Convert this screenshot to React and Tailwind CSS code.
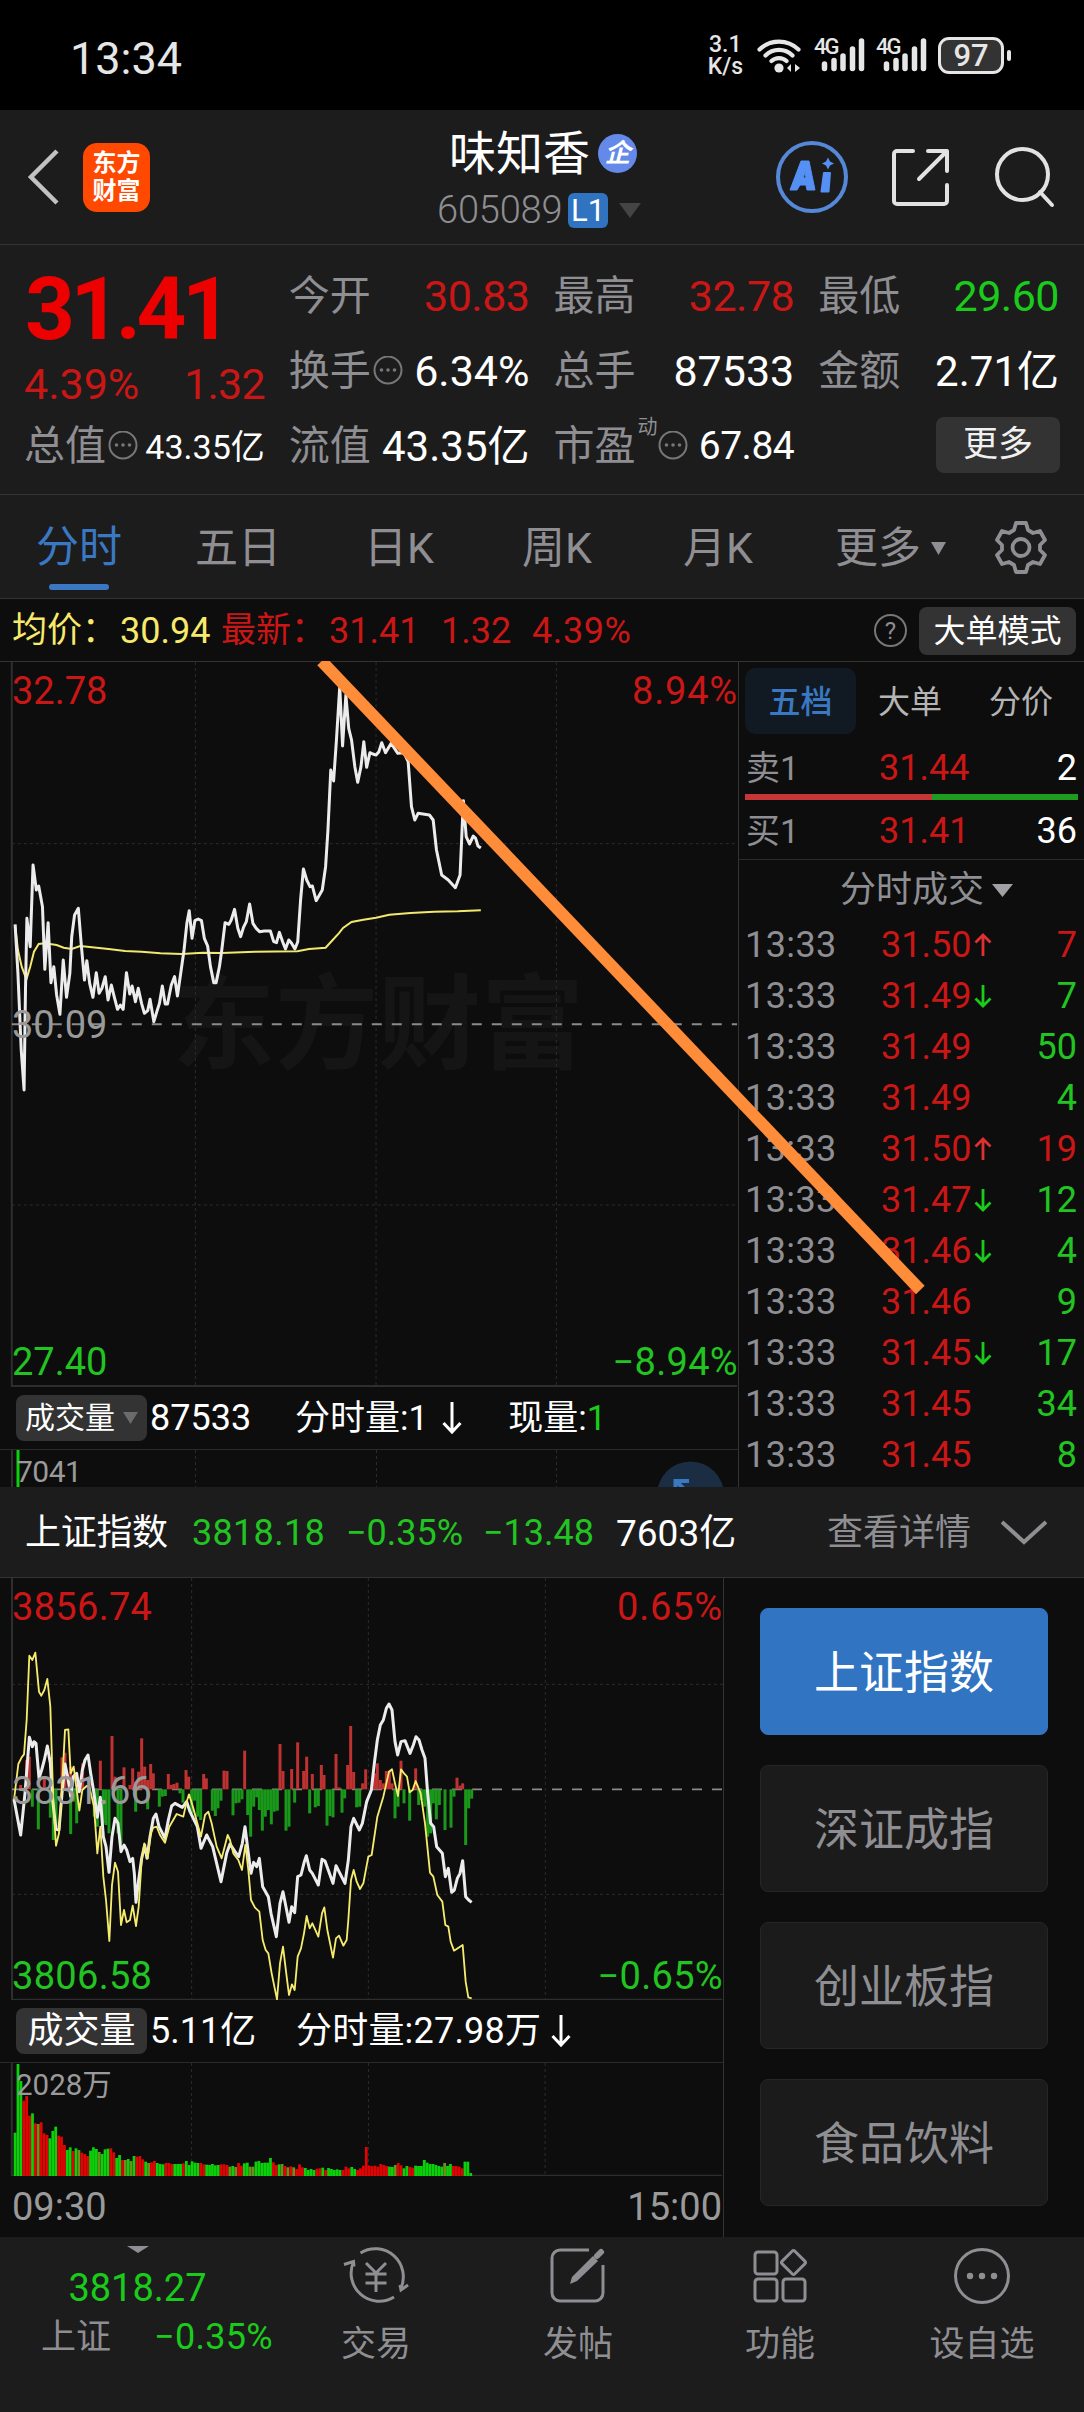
import clsx from "clsx";

const PRICE_LINE =
  "32,1003 38,1150 45,1380 51,1500 54,1200 57,985 64,1070 70,825 77,900 82,888 90,950 95,1138 102,998 108,1178 114,1130 120,1215 127,1273 134,1110 141,1222 148,1150 152,1040 158,975 166,955 172,1060 179,1170 184,1112 190,1180 197,1222 204,1148 210,1210 216,1195 223,1160 229,1230 236,1185 242,1220 249,1258 255,1245 261,1258 268,1148 275,1212 280,1188 287,1235 293,1195 300,1240 306,1270 313,1262 318,1228 326,1295 333,1262 338,1240 344,1188 350,1242 355,1242 363,1185 370,1160 376,1218 383,1150 390,1080 396,1000 401,962 407,1045 413,992 420,987 427,992 433,1045 440,1068 446,1130 453,1178 458,1178 465,1130 470,1080 477,998 485,1003 490,990 497,958 504,1015 510,1040 516,1012 522,995 529,942 536,1000 543,1015 550,1025 560,1023 573,1023 580,1055 586,1058 592,1027 599,1055 605,1077 612,1050 618,1060 625,1077 631,1055 637,930 643,837 650,870 657,890 662,888 670,932 677,915 683,900 690,830 695,720 701,540 707,573 713,450 720,290 726,468 733,315 739,415 745,450 752,530 758,577 765,530 771,455 777,532 784,488 790,492 797,495 803,485 809,458 817,488 829,460 843,490 856,488 865,515 872,650 879,690 886,670 910,675 918,690 925,780 936,855 950,870 965,893 975,855 982,632 988,740 995,762 1003,738 1008,745 1013,768 1019,774";

const AVG_LINE =
  "32,1005 38,1080 46,1130 56,1168 64,1130 72,1085 82,1062 95,1060 120,1065 135,1073 152,1077 170,1068 195,1072 230,1077 265,1083 300,1085 340,1090 385,1092 430,1088 470,1089 540,1085 630,1084 655,1077 690,1073 705,1050 718,1030 727,1014 745,996 770,989 797,983 825,974 870,969 920,965 970,964 1019,961";

const INDEX_LINE =
  "42,718 62,825 75,700 88,532 97,560 102,545 108,550 117,655 125,630 133,600 142,558 151,610 158,720 168,808 177,810 186,700 195,612 203,650 212,708 220,650 230,640 238,695 247,630 255,600 264,585 272,640 282,700 292,772 301,712 310,830 318,860 327,937 336,830 345,775 354,790 363,875 372,855 380,870 390,905 398,895 403,940 408,1027 416,960 425,895 434,855 441,895 450,830 460,775 468,762 477,800 495,835 505,780 515,738 525,730 547,742 560,725 570,755 592,800 603,865 620,825 638,860 663,965 680,880 690,852 705,875 716,890 727,850 735,800 745,880 753,940 761,907 770,920 778,895 788,980 805,1010 813,1060 829,1130 840,1030 849,995 867,1087 875,1040 884,1058 893,950 903,945 913,905 919,887 929,930 937,940 955,975 966,898 975,903 999,970 1008,917 1035,970 1045,900 1053,800 1061,775 1078,810 1087,790 1100,725 1114,690 1123,610 1132,540 1141,495 1150,480 1159,445 1167,432 1176,450 1185,545 1193,585 1203,545 1215,542 1230,580 1240,555 1248,530 1257,540 1266,570 1275,595 1283,700 1292,790 1301,800 1310,860 1327,880 1336,950 1345,925 1355,997 1363,990 1372,955 1380,940 1388,902 1397,1010 1406,1020 1415,1027";

const INDEX_AVG_LINE =
  "42,720 55,612 65,592 72,583 80,480 88,287 97,300 106,278 117,395 124,407 133,390 142,357 151,440 160,730 168,857 177,820 186,680 195,510 205,508 212,640 221,620 230,690 238,752 247,690 260,678 268,680 282,740 292,880 301,800 310,950 318,1020 328,1143 336,975 345,908 354,935 363,1095 372,1050 380,1087 390,1080 398,1037 408,1098 416,1040 425,900 433,850 443,895 452,820 460,803 470,800 480,825 495,848 508,800 530,762 550,770 560,725 567,703 580,745 592,790 603,830 615,765 625,755 635,790 650,860 665,895 683,825 690,840 700,880 715,900 726,930 736,855 745,930 753,1020 765,1043 778,1055 788,1140 797,1170 805,1180 815,1240 831,1318 840,1210 849,1160 860,1250 867,1305 876,1273 884,1290 893,1190 903,1165 912,1120 920,1068 929,1105 937,1090 955,1130 966,1060 973,1042 982,1110 999,1193 1008,1135 1017,1127 1030,1157 1040,1140 1045,1080 1053,960 1061,930 1070,965 1080,987 1090,970 1105,890 1115,885 1132,770 1150,710 1167,635 1176,628 1185,670 1194,708 1203,628 1212,640 1221,650 1229,697 1238,690 1247,663 1262,700 1275,790 1290,938 1300,950 1312,1005 1327,1025 1336,1095 1345,1100 1352,1145 1362,1172 1388,1155 1397,1265 1405,1312 1415,1315";

// x,y of the bar end; bars above the zero line are red, below are green
const FLOW_BARS =
  "62,675 80,600 88,590 133,655 186,592 195,578 212,620 248,610 301,602 336,528 345,650 372,622 390,675 398,625 407,665 416,635 425,535 434,620 443,660 452,612 460,640 505,642 514,675 522,672 531,668 558,630 566,650 611,642 619,655 672,632 681,633 734,572 840,552 849,633 875,627 893,547 911,633 920,590 937,642 964,615 972,645 1008,582 1017,682 1043,615 1052,498 1061,636 1088,670 1097,628 1124,640 1132,610 1141,660 1150,670 1159,633 1168,632 1176,670 1203,602 1247,625 1371,653 1380,677 1388,670 97,740 115,808 151,773 160,840 168,800 212,822 221,725 230,790 283,770 292,800 310,790 318,795 327,820 354,820 363,850 407,755 443,748 478,740 487,710 496,708 540,700 549,728 575,760 584,722 593,770 602,780 637,752 646,768 654,745 663,722 699,766 708,730 717,728 726,718 743,765 752,830 761,740 770,712 778,750 787,812 796,770 805,750 814,793 823,755 832,752 858,812 867,800 884,728 929,760 946,742 955,738 981,797 990,768 999,772 1026,758 1034,715 1070,742 1079,740 1185,775 1194,740 1212,730 1229,782 1256,735 1265,720 1274,740 1283,830 1292,820 1300,730 1309,778 1318,735 1335,810 1353,803 1362,710 1397,855 1406,745 1415,716"
    .split(" ")
    .map((p) => p.split(",").map(Number));

const VOLUME_BARS =
  "g458 g252 g303 r362 r348 r407 g400 r430 o432 r427 r460 r465 g475 g453 g440 r467 r470 r495 g510 g502 r513 g505 o510 r518 r522 r528 g512 g502 g507 o516 g522 g508 g506 r505 r517 g534 g525 r540 o540 g537 o543 g528 r530 r528 r538 g545 o549 r547 r543 g549 g552 g553 r549 r549 r552 g552 g552 g552 r550 g543 g555 g544 g548 g549 r549 r553 g554 g555 g552 g556 g555 r553 r553 r555 o560 g558 o561 r549 r557 g550 g548 o560 o560 g545 g543 g549 g548 g548 g534 r547 r555 g553 o552 r558 o562 r559 o562 r567 r553 r562 g564 g570 g567 g570 r566 r565 g563 r570 g564 g567 g570 g568 g570 r570 r560 r565 g561 g567 r570 r565 r557 r501 r557 r558 r557 r560 r552 r555 r558 g560 g561 o555 r549 r556 g565 g558 r561 r563 g557 g558 g558 g540 g548 g552 g552 g555 g558 g560 o549 g558 g552 r558 r558 r560 r565 g545 g545 g579".split(
    " ",
  );

const VOLUME_COLORS = { g: "#0bd10b", r: "#e00505", o: "#6f8f1c" };

const TICKS = [
  { price: "31.50", dir: "up", qty: 7, red: true },
  { price: "31.49", dir: "down", qty: 7 },
  { price: "31.49", qty: 50 },
  { price: "31.49", qty: 4 },
  { price: "31.50", dir: "up", qty: 19, red: true },
  { price: "31.47", dir: "down", qty: 12 },
  { price: "31.46", dir: "down", qty: 4 },
  { price: "31.46", qty: 9 },
  { price: "31.45", dir: "down", qty: 17 },
  { price: "31.45", qty: 34 },
  { price: "31.45", qty: 8 },
];

const INDEXES = ["上证指数", "深证成指", "创业板指", "食品饮料"];

const Triangle = ({ className }) => (
  <svg viewBox="0 0 20 12" preserveAspectRatio="none" className={className}>
    <path d="M0 0h20L10 12z" fill="currentColor" />
  </svg>
);

const InfoDots = () => (
  <svg viewBox="0 0 32 32" className="size-8 shrink-0 text-[#77777a]">
    <circle cx="17" cy="14" r="13.500" fill="none" stroke="currentColor" strokeWidth="2" />
    <circle cx="10.500" cy="14" r="1.800" fill="currentColor" />
    <circle cx="17" cy="14" r="1.800" fill="currentColor" />
    <circle cx="23.500" cy="14" r="1.800" fill="currentColor" />
  </svg>
);

const Arrow = ({ dir, className }) => (
  <svg
    viewBox="0 0 18 24"
    className={clsx(className, dir === "up" && "rotate-180")}
    fill="none"
    stroke="currentColor"
    strokeWidth="2.800"
  >
    <path d="M9 1v21M1.500 14.500L9 22l7.500-7.500" />
  </svg>
);

const LongArrow = ({ className }) => (
  <svg viewBox="0 0 20 34" className={clsx("h-[34px] w-5", className)} fill="none" stroke="currentColor" strokeWidth="3">
    <path d="M10 1v30M1.500 22L10 31l8.500-9" />
  </svg>
);

const Signal = () => (
  <div className="relative h-9 w-[51px]">
    <span className="absolute -top-px left-0 text-[22px] font-medium tracking-[-2px]">4G</span>
    <svg viewBox="0 0 51 36" className="size-full" stroke="currentColor" strokeWidth="5.500" strokeLinecap="round">
      <path d="M10.500 27v4.500M20 23.500v8M29 19v12.500M38.500 12v19.500M47.500 4v27.500" />
    </svg>
  </div>
);

const StatusBar = () => (
  <div className="flex h-[110px] items-center bg-black pl-[70px] pr-[73px] text-[#e6e6e6]">
    <span className="pt-1.5 text-[45px]">13:34</span>
    <div className="ml-auto flex items-center">
      <div className="mr-[14px] flex flex-col items-center text-[23px] font-medium">
        <span>3.1</span>
        <span className="-mt-px">K/s</span>
      </div>
      <svg viewBox="0 0 44 36" className="mr-[13px] h-9 w-11" fill="none" stroke="currentColor">
        <path d="M2.500 12.500a28 28 0 0 1 39 0M8.500 18.500a19 19 0 0 1 27 0M14.500 24a11 11 0 0 1 15 0" strokeWidth="4.200" strokeLinecap="round" />
        <circle cx="22" cy="31" r="4.600" fill="currentColor" stroke="none" />
        <path d="M34 27v8l-4-4zM38 35v-8l5 4z" fill="currentColor" stroke="none" />
      </svg>
      <div className="mr-[11px]">
        <Signal />
      </div>
      <div className="mr-[11px]">
        <Signal />
      </div>
      <div className="flex h-[37px] w-[66px] items-center justify-center rounded-[11px] border-[3px] border-current bg-[#333] text-[31px] font-medium">
        97
      </div>
      <div className="ml-[3px] h-[11px] w-1 rounded-full bg-current" />
    </div>
  </div>
);

const Header = () => (
  <header className="flex h-[135px] items-center border-b border-[#333] bg-[#1c1c1c]">
    <svg viewBox="0 0 34 56" className="ml-[26px] h-14 w-[34px]" fill="none" stroke="#c2c2c2" strokeWidth="4.500">
      <path d="M31 2L5 28l26 26" />
    </svg>
    <div className="ml-[23px] flex h-[69px] w-[67px] flex-col items-center justify-center gap-[4px] rounded-[14px] bg-[#ff4800] text-[24px] font-bold text-white">
      <span>东方</span>
      <span>财富</span>
    </div>
    <div className="ml-[287px] flex w-[208px] flex-col">
      <div className="mt-[3px] flex h-[48px] items-center pl-[12px]">
        <span className="text-[47px] text-white">味知香</span>
        <span className="ml-[8px] flex size-[39px] items-center justify-center rounded-full bg-[#6489e8] text-[26px] font-bold italic text-white">
          企
        </span>
      </div>
      <div className="mt-[15px] flex h-[36px] items-center">
        <span className="w-[131px] text-[38px] font-light tracking-[-0.2px] text-[#8e8e93]">605089</span>
        <span className="flex h-[35px] w-10 items-center justify-center rounded-[6px] bg-[#2f73c1] text-[31px] text-white">
          L1
        </span>
        <Triangle className="ml-[11px] h-[15px] w-[22px] text-[#444]" />
      </div>
    </div>
    <svg viewBox="0 0 74 74" className="ml-[130px] size-[74px]">
      <circle cx="37" cy="37" r="34" fill="none" stroke="#5588d6" strokeWidth="4" />
      <path d="M26 21h8l6 29h-8l-1-5h-6l-3 5h-7z M28.500 38h2.500l-1-7z" fill="#5590f5" fillRule="evenodd" stroke="#5590f5" strokeLinejoin="round" />
      <path d="M49 33h6l-1.500 18.500h-7z" fill="#5590f5" stroke="#5590f5" strokeWidth="2" strokeLinejoin="round" />
      <path d="M53 17.500l2 4 4 2-4 2-2 4-2-4-4-2 4-2z" fill="#5590f5" />
    </svg>
    <svg viewBox="0 0 60 60" className="ml-[41px] size-[60px]" fill="none" stroke="#e2e2e2" strokeWidth="4" strokeLinecap="round" strokeLinejoin="round">
      <path d="M23 4H7a3 3 0 0 0-3 3v47a3 3 0 0 0 3 3h47a3 3 0 0 0 3-3V38M38 4h19v20M57 4L29 32" />
    </svg>
    <svg viewBox="0 0 62 62" className="ml-[44px] size-[62px]" fill="none" stroke="#e2e2e2" strokeWidth="4">
      <circle cx="28.500" cy="28.500" r="25.500" />
      <path d="M46 46l12 13" strokeLinecap="round" />
    </svg>
  </header>
);

const Stat = ({ label, value, info, sup, className }) => (
  <div className="flex h-[75px] items-center">
    <span className="-ml-px text-[41px] text-[#8e8e93]">{label}</span>
    {sup && <span className="-mr-0.5 mb-10 ml-0.5 text-[20px] text-[#8e8e93]">{sup}</span>}
    {info && <InfoDots />}
    <span className={clsx("ml-auto whitespace-nowrap", className)}>{value}</span>
  </div>
);

const Stats = () => (
  <section className="grid h-[250px] grid-cols-4 gap-x-[25px] border-b border-[#333] bg-[#1c1c1c] px-[25px] pt-[14px] text-white">
    <div>
      <div className="flex h-[101px] items-center text-[87px] font-bold tracking-[-4.5px] text-[#ec0000]">31.41</div>
      <div className="flex h-[49px] items-center justify-between text-[43px] text-[#cb1616]">
        <span className="-ml-px">4.39%</span>
        <span className="tracking-[-0.8px]">1.32</span>
      </div>
      <Stat label="总值" value="43.35亿" info className="text-[34px]" />
    </div>
    <div>
      <Stat label="今开" value="30.83" className="text-[43px] tracking-[-0.5px] text-[#cb1616]" />
      <Stat label="换手" value="6.34%" info className="text-[43px]" />
      <Stat label="流值" value="43.35亿" className="text-[42px]" />
    </div>
    <div>
      <Stat label="最高" value="32.78" className="text-[43px] tracking-[-0.5px] text-[#cb1616]" />
      <Stat label="总手" value="87533" className="text-[43px]" />
      <Stat label="市盈" sup="动" value="67.84" info className="text-[39px] tracking-[-0.5px]" />
    </div>
    <div>
      <Stat label="最低" value="29.60" className="text-[43px] tracking-[-0.5px] text-[#1bcb1b]" />
      <Stat label="金额" value="2.71亿" className="text-[42px]" />
      <div className="flex h-[75px] items-center justify-end">
        <button className="-mr-px mb-1 h-14 w-[124px] rounded-lg bg-[#333] text-[35px] text-[#f0f0f0]">更多</button>
      </div>
    </div>
  </section>
);

const Tabs = () => (
  <nav className="flex h-[104px] items-center border-b border-[#333] bg-[#1c1c1c] text-[43px] text-[#8e8e93]">
    <div className="ml-[36px] flex w-[86px] flex-col items-center text-[#3a78c3]">
      <span className="mt-[22px]">分时</span>
      <div className="mt-[15px] h-[6px] w-[60px] rounded-full bg-[#3a78c3]" />
    </div>
    <div className="flex items-center pt-[3px]">
      <span className="ml-[73px]">五日</span>
      <span className="ml-[83px] w-[74px]">日K</span>
      <span className="ml-[84px] w-[75px]">周K</span>
      <span className="ml-[86px] w-[75px]">月K</span>
      <span className="ml-[77px]">更多</span>
      <Triangle className="ml-[10px] h-[13px] w-[15px]" />
      <svg viewBox="0 0 54 54" className="ml-[48px] size-[54px]" fill="none" stroke="currentColor" strokeWidth="3.800" strokeLinejoin="round">
        <path d="M22 2h10l2 7 5 3 7-2 5 9-5 5v5l5 5-5 9-7-2-5 3-2 7H22l-2-7-5-3-7 2-5-9 5-5v-5l-5-5 5-9 7 2 5-3z" />
        <circle cx="27" cy="26.500" r="8.500" />
      </svg>
    </div>
  </nav>
);

const QuoteBar = () => (
  <div className="flex h-[62px] items-center pl-[12px] pr-[8px] pt-px text-[36px] text-[#cb1616]">
    <span className="w-[108px] text-[35px] text-[#f7e96c]">均价：</span>
    <span className="w-[101px] text-[#f7e96c]">30.94</span>
    <span className="w-[108px] text-[35px]">最新：</span>
    <span className="w-[112px]">31.41</span>
    <span className="w-[91px]">1.32</span>
    <span className="tracking-[0.6px]">4.39%</span>
    <div className="ml-auto flex size-[33px] items-center justify-center rounded-full border-2 border-[#77777a] text-[24px] text-[#8e8e93]">
      ?
    </div>
    <button className="ml-[12px] h-12 w-[157px] rounded-lg bg-[#333] text-[32px] text-white">大单模式</button>
  </div>
);

const PriceChart = () => (
  <div className="relative h-[726px] border-t border-[#333]">
    <span className="absolute left-[172px] top-[312px] text-[103px] font-bold text-[#151515]">东方财富</span>
    <svg viewBox="0 216 1564 2175" preserveAspectRatio="none" className="absolute inset-0 size-full" fill="none">
      <g stroke="#2c2c2c" strokeDasharray="3 3">
        <path vectorEffect="non-scaling-stroke" d="M414 216V2388M797 216V2388M1179 216V2388M25 761H1560M25 1845H1560" />
      </g>
      <path vectorEffect="non-scaling-stroke" d="M25 216V2388H1562" stroke="#2e2e2e" strokeWidth="2" />
      <path vectorEffect="non-scaling-stroke" d="M25 1303H1562" stroke="#8a8a8a" strokeWidth="2" strokeDasharray="10 10" />
      <polyline vectorEffect="non-scaling-stroke" points={AVG_LINE} stroke="#f2e86e" strokeWidth="2" />
      <polyline vectorEffect="non-scaling-stroke" points={PRICE_LINE} stroke="#ececec" strokeWidth="3" strokeLinejoin="round" />
    </svg>
    <div className="absolute inset-0 text-[38px]">
      <span className="absolute left-[12px] top-[10px] text-[#cb1616]">32.78</span>
      <span className="absolute right-0 top-[10px] tracking-[0.8px] text-[#cb1616]">8.94%</span>
      <span className="absolute left-[12px] top-[344px] text-[#9a9a9a]">30.09</span>
      <span className="absolute left-[12px] top-[681px] text-[#22c422]">27.40</span>
      <span className="absolute right-0 top-[681px] tracking-[0.3px] text-[#22c422]">−8.94%</span>
    </div>
  </div>
);

const VolumeHeader = ({ children, menu }) => (
  <div className="flex h-[62px] items-center pl-4 text-[36px] text-white">
    <div
      className={clsx(
        "mr-[3px] flex h-[46px] w-[131px] items-center rounded-lg bg-[#333]",
        menu ? "pl-[9px] text-[30px]" : "justify-center text-[36px]",
      )}
    >
      成交量
      {menu && <Triangle className="ml-[8px] h-[12px] w-[15px] text-[#6b6b6b]" />}
    </div>
    {children}
  </div>
);

const OrderBook = () => (
  <aside className="border-l border-t border-[#333]">
    <div className="mt-[6px] flex h-[66px] items-center pl-[6px] text-[32px] text-[#b4b4b4]">
      <div className="flex h-full w-[111px] items-center justify-center rounded-[10px] bg-[#111a23] pt-0.5 font-medium text-[#3a78c3]">
        五档
      </div>
      <span className="ml-[22px] pt-0.5">大单</span>
      <span className="ml-[47px] pt-0.5">分价</span>
    </div>
    <div className="flex h-[66px] items-center pl-[7px] pr-[7px] pt-px text-[36px]">
      <span className="w-[133px] text-[34px] text-[#8e8e93]">卖1</span>
      <span className="text-[#cb1616]">31.44</span>
      <span className="ml-auto text-white">2</span>
    </div>
    <div className="-mt-[6px] ml-[6px] mr-[6px] flex h-[6px]">
      <div className="w-[187px] bg-[#c73636]" />
      <div className="flex-1 bg-[#1f9c1f]" />
    </div>
    <div className="flex h-[60px] items-center border-b border-[#2a2a2a] pl-[7px] pr-[7px] pt-0.5 text-[36px]">
      <span className="w-[133px] text-[34px] text-[#8e8e93]">买1</span>
      <span className="text-[#cb1616]">31.41</span>
      <span className="ml-auto text-white">36</span>
    </div>
    <div className="flex h-[58px] items-center pl-[101px] pt-0.5 text-[36px] text-[#8e8e93]">
      分时成交
      <Triangle className="ml-[8px] h-[13px] w-[21px] text-[#a0a0a5]" />
    </div>
    {TICKS.map((t, i) => (
      <div key={i} className="flex h-[51px] items-center pl-[6px] pr-[7px] pt-0.5 text-[36px]">
        <span className="w-[136px] tracking-[0.4px] text-[#8e8e93]">13:33</span>
        <span className="w-[93px] text-[#cb1616]">{t.price}</span>
        {t.dir && (
          <Arrow dir={t.dir} className={clsx("h-6 w-[18px]", t.dir === "up" ? "text-[#e03030]" : "text-[#1bcb1b]")} />
        )}
        <span className={clsx("ml-auto", t.red ? "text-[#cb1616]" : "text-[#22c422]")}>{t.qty}</span>
      </div>
    ))}
  </aside>
);

const MainPanel = () => (
  <section className="relative grid h-[826px] grid-cols-[738px_1fr] overflow-hidden">
    <div>
      <PriceChart />
      <VolumeHeader menu>
        <span className="w-[145px]">87533</span>
        <span className="text-[35px]">分时量:1</span>
        <LongArrow className="ml-[14px]" />
        <span className="ml-[46px] text-[35px]">现量:</span>
        <span className="text-[35px] text-[#1bcb1b]">1</span>
      </VolumeHeader>
      <div className="relative h-[38px] overflow-hidden border-t border-[#2a2a2a]">
        <svg viewBox="0 0 738 37" className="absolute inset-0 h-[37px] w-[738px]" fill="none">
          <path d="M195.500 0V37M376.500 0V37M556.500 0V37" stroke="#2c2c2c" strokeDasharray="3 3" />
          <path d="M12 0V37" stroke="#2e2e2e" strokeWidth="2" />
          <path d="M18 0V37" stroke="#0bd10b" strokeWidth="3" />
          <circle cx="690.500" cy="45" r="33.500" fill="#1a2d42" />
          <path d="M675.500 38V31H689M676 31l10 10" stroke="#3a78c3" strokeWidth="4" />
        </svg>
        <span className="absolute left-4 top-[7px] text-[30px] tracking-[-0.5px] text-[#9a9a9a]">7041</span>
      </div>
    </div>
    <OrderBook />
    {/* hand drawn trend line */}
    <svg viewBox="0 0 1084 826" className="pointer-events-none absolute inset-0 size-full overflow-visible">
      <path d="M321.600 0.200L920.300 629" stroke="#ff8c38" strokeWidth="12" />
    </svg>
  </section>
);

const IndexBar = () => (
  <div className="flex h-[91px] items-center border-b border-[#333] bg-[#1c1c1c] pl-[25px] pt-0.5 text-[36px] text-[#22c422]">
    <span className="w-[167px] text-[36px] tracking-[-0.3px] text-white">上证指数</span>
    <span className="w-[154px] tracking-[0.3px]">3818.18</span>
    <span className="w-[137px]">−0.35%</span>
    <span className="w-[133px]">−13.48</span>
    <span className="text-[37px] text-white">7603亿</span>
    <span className="ml-auto text-[#8e8e93]">查看详情</span>
    <svg viewBox="0 0 46 26" className="ml-[30px] mr-[37px] h-[26px] w-[46px]" fill="none" stroke="#8e8e93" strokeWidth="4">
      <path d="M1 2l22 20L45 2" />
    </svg>
  </div>
);

const IndexChart = () => (
  <div className="relative h-[422px] text-[38px]">
    <svg viewBox="0 54 2169 1266" preserveAspectRatio="none" className="absolute inset-0 size-full" fill="none">
      <path d="M575 54V1320M1105 54V1320M1636 54V1320M36 373H2169M36 1003H2169" stroke="#2c2c2c" strokeWidth="3" strokeDasharray="9 9" />
      <path d="M36 54V1319H2167" stroke="#2e2e2e" strokeWidth="6" />
      <path d="M36 688H2169" stroke="#8a8a8a" strokeWidth="5" strokeDasharray="30 30" />
      {FLOW_BARS.map(([x, y], i) => (
        <rect
          key={i}
          x={x - 4.5}
          y={Math.min(y, 688)}
          width="9"
          height={Math.abs(688 - y)}
          fill={y < 688 ? "#bf3232" : "#1a981a"}
        />
      ))}
      <polyline points={INDEX_LINE} stroke="#ececec" strokeWidth="9" strokeLinejoin="round" />
      <polyline points={INDEX_AVG_LINE} stroke="#f5eb6c" strokeWidth="5.500" strokeLinejoin="round" />
    </svg>
    <span className="absolute left-[12px] top-[10px] tracking-[0.3px] text-[#cb1616]">3856.74</span>
    <span className="absolute right-0 top-[10px] tracking-[0.8px] text-[#cb1616]">0.65%</span>
    <span className="absolute left-[12px] top-[194px] tracking-[0.3px] text-[#9a9a9a]">3831.66</span>
    <span className="absolute left-[12px] top-[379px] tracking-[0.3px] text-[#22c422]">3806.58</span>
    <span className="absolute right-0 top-[379px] tracking-[0.3px] text-[#22c422]">−0.65%</span>
  </div>
);

const IndexPanel = () => (
  <section className="grid h-[659px] grid-cols-[724px_1fr]">
    <div className="border-r border-[#333]">
      <IndexChart />
      <VolumeHeader>
        <span className="w-[146px]">5.11亿</span>
        <span className="tracking-[0.2px]">分时量:27.98万</span>
        <LongArrow className="ml-[10px]" />
      </VolumeHeader>
      <div className="relative h-[114px] border-t border-[#2a2a2a]">
        <svg viewBox="0 249 1532 339" preserveAspectRatio="none" className="absolute inset-0 size-full">
          <path vectorEffect="non-scaling-stroke" d="M406 249V588M781 249V588M1155 249V588" stroke="#2c2c2c" strokeDasharray="3 3" />
          <path vectorEffect="non-scaling-stroke" d="M25 249V587H1530" stroke="#2e2e2e" strokeWidth="2" fill="none" />
          {VOLUME_BARS.map((bar, i) => (
            <rect
              key={i}
              x={29 + i * 6.15}
              y={bar.slice(1)}
              width="5.9"
              height={588 - bar.slice(1)}
              fill={VOLUME_COLORS[bar[0]]}
            />
          ))}
        </svg>
        <span className="absolute left-4 top-[8px] text-[29.5px] text-[#9a9a9a]">2028万</span>
      </div>
      <div className="flex h-[61px] items-center justify-between pl-[12px] pr-px text-[38px] text-[#9a9a9a]">
        <span>09:30</span>
        <span>15:00</span>
      </div>
    </div>
    <div className="flex flex-col gap-[30px] px-9 pt-[30px]">
      {INDEXES.map((name, i) => (
        <button
          key={name}
          className={clsx(
            "h-[127px] rounded-lg border pt-[3px] text-[45px]",
            i === 0 ? "border-[#3174c1] bg-[#3174c1] text-white" : "border-[#262626] bg-[#1b1b1b] text-[#8e8e93]",
          )}
        >
          {name}
        </button>
      ))}
    </div>
  </section>
);

const NavItem = ({ label, children }) => (
  <div className="flex w-[202px] flex-col items-center pt-[7px] text-[35px]">
    <svg viewBox="0 0 66 64" className="mb-[19px] h-16 w-[66px]" fill="none" stroke="currentColor" strokeWidth="3">
      {children}
    </svg>
    {label}
  </div>
);

const BottomNav = () => (
  <footer className="flex h-[175px] bg-[#1c1c1c] text-[#8e8e93]">
    <div className="flex w-[275px] flex-col items-center">
      <Triangle className="mt-[9px] h-[7px] w-[22px]" />
      <span className="mt-[16px] text-[38px] text-[#1bcb1b]">3818.27</span>
      <div className="mt-[12px] flex w-full items-center pl-[41px] text-[35px]">
        上证
        <span className="ml-[43px] text-[36px] tracking-[0.3px] text-[#1bcb1b]">−0.35%</span>
      </div>
    </div>
    <NavItem label="交易">
      <path d="M17.500 9A28 28 0 0 1 57.500 45M51 53A28 28 0 0 1 10.500 18M1 20.500l9.500-3 .5 5M65 41l-7 5-1-5" />
      <path d="M23 19l10 10 10-10M33 29v19M22.500 30h21M22.500 39h21" />
    </NavItem>
    <NavItem label="发帖">
      <path d="M44 6H15a8 8 0 0 0-8 8v35a8 8 0 0 0 8 8h35a8 8 0 0 0 8-8V21" />
      <path d="M25 40l2-7L48 12l5 5L32 37z" fill="currentColor" stroke="none" />
      <path d="M52 12l4-4" strokeWidth="6" strokeLinecap="round" />
    </NavItem>
    <NavItem label="功能">
      <rect x="8" y="8" width="22" height="22" rx="3" />
      <rect x="8" y="35" width="22" height="22" rx="3" />
      <rect x="36" y="35" width="22" height="22" rx="3" />
      <rect x="37.500" y="9.500" width="18" height="18" rx="2" transform="rotate(45 46.500 18.500)" />
    </NavItem>
    <NavItem label="设自选">
      <circle cx="33" cy="32" r="26.500" />
      <g fill="currentColor" stroke="none">
        <circle cx="21" cy="32" r="3.200" />
        <circle cx="33" cy="32" r="3.200" />
        <circle cx="45" cy="32" r="3.200" />
      </g>
    </NavItem>
  </footer>
);

const App = () => {
  return (
    <div className="w-[1084px] bg-[#0d0d0d] font-['Roboto','Noto_Sans_CJK_SC',sans-serif] leading-none">
      <StatusBar />
      <Header />
      <Stats />
      <Tabs />
      <QuoteBar />
      <MainPanel />
      <IndexBar />
      <IndexPanel />
      <BottomNav />
    </div>
  );
};

export default App;
